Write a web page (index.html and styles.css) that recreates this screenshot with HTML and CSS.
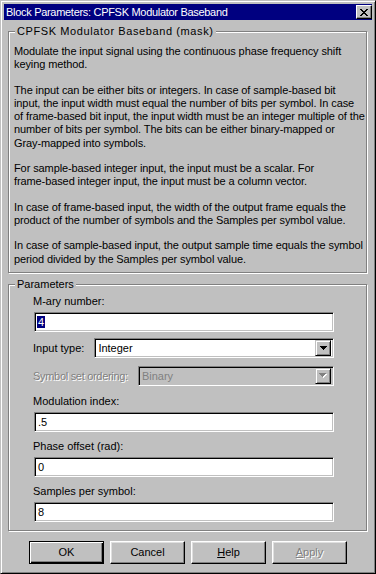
FILE: index.html
```html
<!DOCTYPE html>
<html lang="en">
<head>
  <meta charset="UTF-8" />
  <title>Block Parameters: CPFSK Modulator Baseband</title>
  <link rel="stylesheet" href="styles.css">
</head>
<body>

  <div class="window">
    <div class="titlebar">
      <span class="title">Block Parameters: CPFSK Modulator Baseband</span>
      <span class="close-btn">
        <svg width="8" height="7" viewBox="0 0 8 7" shape-rendering="crispEdges">
          <path d="M0 0h2v1h-2z M6 0h2v1h-2z M1 1h2v1h-2z M5 1h2v1h-2z M2 2h4v1h-4z M3 3h2v1h-2z M2 4h4v1h-4z M1 5h2v1h-2z M5 5h2v1h-2z M0 6h2v1h-2z M6 6h2v1h-2z" fill="#000"/>
        </svg>
      </span>
    </div>

    <div class="content">
      <fieldset class="group desc">
        <legend>CPFSK Modulator Baseband (mask)</legend>
        <p>Modulate the input signal using the continuous phase frequency shift<br>keying method.</p>
        <p>The input can be either bits or integers. In case of sample-based bit<br>input, the input width must equal the number of bits per symbol. In case<br>of frame-based bit input, the input width must be an integer multiple of the<br>number of bits per symbol. The bits can be either binary-mapped or<br>Gray-mapped into symbols.</p>
        <p>For sample-based integer input, the input must be a scalar. For<br>frame-based integer input, the input must be a column vector.</p>
        <p>In case of frame-based input, the width of the output frame equals the<br>product of the number of symbols and the Samples per symbol value.</p>
        <p>In case of sample-based input, the output sample time equals the symbol<br>period divided by the Samples per symbol value.</p>
      </fieldset>

      <fieldset class="group params">
        <legend>Parameters</legend>

        <div class="field">
          <div class="label">M-ary number:</div>
          <div class="edit"><span class="selected">4</span></div>
        </div>

        <div class="row">
          <div class="label">Input type:</div>
          <div class="combo">
            <span class="value">Integer</span>
            <span class="drop">
              <svg width="7" height="4" viewBox="0 0 7 4" shape-rendering="crispEdges">
                <path d="M0 0h7v1h-7z M1 1h5v1h-5z M2 2h3v1h-3z M3 3h1v1h-1z" fill="#000"/>
              </svg>
            </span>
          </div>
        </div>

        <div class="row disabled">
          <div class="label">Symbol set ordering:</div>
          <div class="combo">
            <span class="value">Binary</span>
            <span class="drop">
              <svg width="8" height="5" viewBox="0 0 8 5" shape-rendering="crispEdges">
                <path d="M1 1h7v1h-7z M2 2h5v1h-5z M3 3h3v1h-3z M4 4h1v1h-1z" fill="#fff"/>
                <path d="M0 0h7v1h-7z M1 1h5v1h-5z M2 2h3v1h-3z M3 3h1v1h-1z" fill="#808080"/>
              </svg>
            </span>
          </div>
        </div>

        <div class="field">
          <div class="label">Modulation index:</div>
          <div class="edit">.5</div>
        </div>

        <div class="field">
          <div class="label">Phase offset (rad):</div>
          <div class="edit">0</div>
        </div>

        <div class="field">
          <div class="label">Samples per symbol:</div>
          <div class="edit">8</div>
        </div>
      </fieldset>

      <div class="buttons">
        <button class="btn default">OK</button>
        <button class="btn">Cancel</button>
        <button class="btn"><u>H</u>elp</button>
        <button class="btn" disabled><u>A</u>pply</button>
      </div>
    </div>
  </div>

</body>
</html>
```

FILE: styles.css
```css
* {
  box-sizing: border-box;
}

body {
  margin: 0;
  font-family: "Liberation Sans", Arial, sans-serif;
  font-size: 11px;
  color: #000;
  background: #c0c0c0;
}

.window {
  width: 376px;
  height: 574px;
  background: #c0c0c0;
  border: 1px solid;
  border-color: #c0c0c0 #000 #000 #c0c0c0;
  box-shadow: inset 1px 1px #fff, inset -1px -1px #808080;
  padding: 3px;
  display: flex;
  flex-direction: column;
}

.titlebar {
  height: 16px;
  background: #000080;
  color: #fff;
  display: flex;
  align-items: center;
  justify-content: space-between;
  padding: 0 0 0 2px;
}

.title {
  font-size: 11px;
  letter-spacing: -0.3px;
}

.close-btn {
  width: 16px;
  height: 14px;
  background: #c0c0c0;
  border: 1px solid;
  border-color: #fff #000 #000 #fff;
  box-shadow: inset -1px -1px #808080;
  display: flex;
  align-items: center;
  justify-content: center;
}

.content {
  flex: 1;
  padding: 5px 4px 0 4px;
  display: flex;
  flex-direction: column;
}

.group {
  margin: 0 1px 0 0;
  border: 1px solid #808080;
  box-shadow: inset 1px 1px #fff, 1px 1px #fff;
  min-width: 0;
}

.group legend {
  padding: 0 2px;
  margin-left: 1px;
  line-height: 13px;
  background: #c0c0c0;
}

.desc legend {
  letter-spacing: 0.6px;
}

.desc {
  padding: 7px 2px 6px 5px;
}

.desc p {
  margin: 0 0 12px;
  line-height: 13.3px;
  white-space: nowrap;
  letter-spacing: -0.1px;
}

.desc p:last-child {
  margin-bottom: 0;
}

.params {
  margin-top: 5px;
  padding: 3px 32px 8px 24px;
}

.params legend {
  margin-left: -18px;
}

.label {
  line-height: 14px;
}

.field + .field {
  margin-top: 7px;
}

.row + .field {
  margin-top: 8px;
}

.field .label {
  margin-bottom: 4px;
}

.row + .row {
  margin-top: 8px;
}

.field + .row {
  margin-top: 6px;
}

.row {
  display: flex;
  align-items: center;
  gap: 10px;
}

.edit,
.combo {
  height: 20px;
  background: #fff;
  border: 1px solid;
  border-color: #808080 #fff #fff #808080;
  box-shadow: inset 1px 1px #000, inset -1px -1px #c0c0c0;
  line-height: 18px;
  padding: 0 3px;
  margin-left: 1px;
}

.selected {
  background: #000080;
  color: #fff;
  padding: 0 1px;
  margin-left: -1px;
}

.combo {
  flex: 1;
  display: flex;
  justify-content: space-between;
  padding: 2px 2px 2px 3px;
  margin-left: 0;
}

.combo .value {
  line-height: 14px;
}

.drop {
  width: 16px;
  height: 16px;
  margin: -1px 0;
  background: #c0c0c0;
  border: 1px solid;
  border-color: #c0c0c0 #000 #000 #c0c0c0;
  box-shadow: inset 1px 1px #fff, inset -1px -1px #808080;
  display: flex;
  align-items: center;
  justify-content: center;
}

.disabled .label {
  color: #808080;
  text-shadow: 1px 1px #fff;
  letter-spacing: -0.3px;
}

.disabled .combo {
  background: #c0c0c0;
  color: #808080;
}

.buttons {
  margin-top: 10px;
  display: flex;
  justify-content: center;
  gap: 6px;
}

.btn {
  width: 75px;
  height: 23px;
  font-family: inherit;
  font-size: 11px;
  background: #c0c0c0;
  color: #000;
  border: 1px solid;
  border-color: #fff #000 #000 #fff;
  box-shadow: inset -1px -1px #808080, inset 1px 1px #dfdfdf;
  padding: 0;
}

.btn.default {
  border-color: #000;
  box-shadow: inset 1px 1px #fff, inset -1px -1px #000, inset -2px -2px #808080;
}

.btn:disabled {
  color: #808080;
  text-shadow: 1px 1px #fff;
}
```
